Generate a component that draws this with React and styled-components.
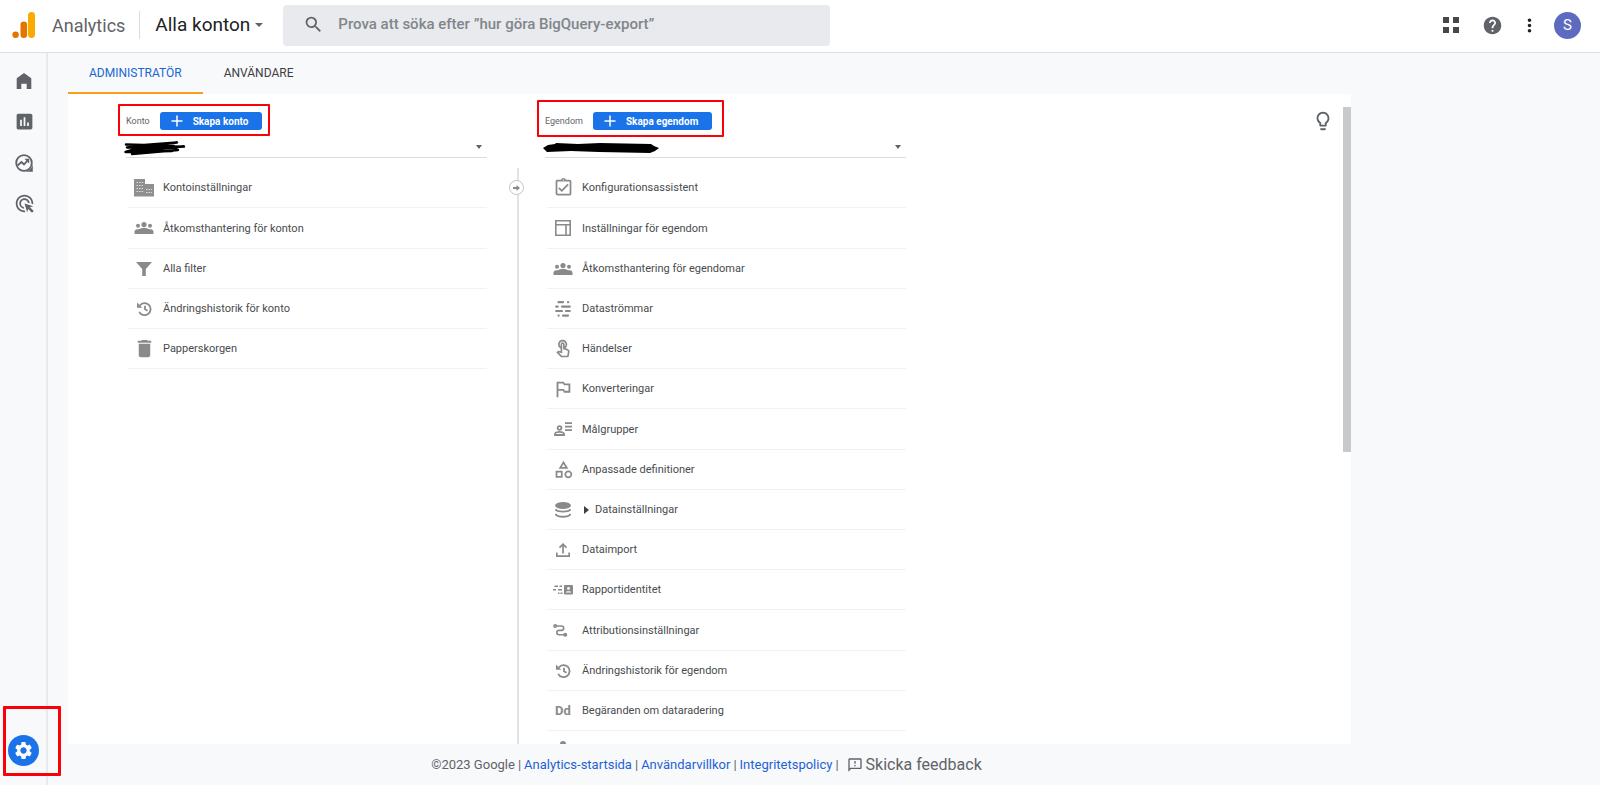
import React from "react";
import styled, { createGlobalStyle } from "styled-components";
import {
  MdAdsClick,
  MdDelete,
  MdHelp,
  MdInsertChart,
  MdMoreVert,
  MdOutlineAssignmentTurnedIn,
  MdOutlineCategory,
  MdOutlineFeedback,
  MdOutlineLightbulb,
  MdOutlineTouchApp,
  MdOutlinedFlag,
  MdSearch,
  MdSettings,
} from "react-icons/md";

const GlobalStyle = createGlobalStyle`
  * {
    box-sizing: border-box;
  }

  body {
    margin: 0;
    font-family: Roboto, "Liberation Sans", sans-serif;
    color: #3c4043;
    background-color: #f8f9fb;
  }

  button,
  input,
  select {
    font-family: inherit;
  }

  svg {
    display: block;
    flex-shrink: 0;
  }
`;

const Page = styled.div`
  height: 100vh;
  display: flex;
  flex-direction: column;
`;

const Header = styled.header`
  height: 53px;
  padding: 0 19px 2px 12px;
  display: flex;
  align-items: center;
  background-color: #ffffff;
  border-bottom: 1px solid #dfe0e2;
`;

const Brand = styled.a`
  height: 28px;
  padding-right: 14px;
  margin-right: 15px;
  display: flex;
  align-items: center;
  gap: 16px;
  border-right: 1px solid #dadce0;
  color: #5f6368;
  font-size: 18px;
  text-decoration: none;
`;

const AccountPicker = styled.button`
  margin-right: 20px;
  padding: 0;
  display: flex;
  align-items: center;
  gap: 5px;
  border: none;
  background: none;
  color: #202124;
  font-size: 19px;
  line-height: 24px;
  white-space: nowrap;
`;

const SearchBox = styled.label`
  height: 41px;
  flex: 0 1 547px;
  padding: 0 20px 2px;
  display: flex;
  align-items: center;
  gap: 14px;
  border-radius: 4px;
  background-color: #e8eaed;
  color: #5f6368;
`;

const SearchInput = styled.input`
  flex: 1;
  min-width: 0;
  padding: 0;
  border: none;
  outline: none;
  background: none;
  font-size: 15px;
  font-weight: 500;

  &::placeholder {
    color: #80868b;
    opacity: 1;
  }
`;

const HeaderActions = styled.div`
  margin-left: auto;
  display: flex;
  align-items: center;
`;

const IconButton = styled.button`
  width: ${(props) => props.$width || 40}px;
  height: 32px;
  padding: 0;
  display: flex;
  align-items: center;
  justify-content: center;
  border: none;
  background: none;
  color: ${(props) => props.$color || "#5f6368"};
`;

const Avatar = styled.button`
  width: 27px;
  height: 27px;
  margin-left: 9px;
  padding: 0;
  border: none;
  border-radius: 50%;
  background-color: #5c6bc0;
  color: #ffffff;
  font-size: 15px;
`;

const Body = styled.div`
  flex: 1;
  min-height: 0;
  display: flex;
`;

const Sidebar = styled.nav`
  width: 48px;
  flex-shrink: 0;
  padding: 7px 0 19px;
  display: flex;
  flex-direction: column;
  align-items: center;
  border-right: 2px solid #e8eaed;
`;

const SideLink = styled.a`
  width: 46px;
  height: 41px;
  padding-left: 2px;
  display: flex;
  align-items: center;
  justify-content: center;
  color: #5f6368;
`;

const AdminSlot = styled.div`
  position: relative;
  margin-top: auto;
`;

const AdminButton = styled.button`
  width: 31px;
  height: 31px;
  padding: 0;
  display: flex;
  align-items: center;
  justify-content: center;
  border: none;
  border-radius: 50%;
  background-color: #1a73e8;
  color: #ffffff;
`;

/* red frame drawn round the controls that the guide talks about */
const Highlight = styled.span`
  position: absolute;
  inset: ${(props) => props.$inset};
  border: ${(props) => props.$thickness || 2}px solid #fb0007;
  border-radius: 1px;
  pointer-events: none;
`;

const Main = styled.main`
  flex: 1;
  min-width: 0;
  padding: 0 249px 0 20px;
  display: flex;
  flex-direction: column;
`;

const Tabs = styled.div`
  height: 41px;
  flex-shrink: 0;
  display: flex;
`;

const Tab = styled.button`
  padding: 0 21px;
  border: none;
  border-bottom: 2px solid ${(props) => (props.$active ? "#f99d1c" : "transparent")};
  background: none;
  color: ${(props) => (props.$active ? "#1967d2" : "#3c4043")};
  font-size: 12px;
`;

const Panel = styled.section`
  flex: 1;
  min-height: 0;
  display: flex;
  overflow: hidden;
  background-color: #ffffff;
`;

const Columns = styled.div`
  flex: 1;
  padding: 18px 18px 0 58px;
  display: grid;
  grid-template-columns: 1fr 58px 1fr 58px 1fr;
`;

const ScrollTrack = styled.div`
  width: 8px;
  padding-top: 13px;
`;

const ScrollThumb = styled.div`
  height: 345px;
  background-color: #c9c9c9;
`;

const Column = styled.div`
  min-width: 0;
`;

const ColumnHead = styled.div`
  position: relative;
  width: max-content;
  height: 18px;
  display: flex;
  align-items: center;
  gap: 10px;
  color: #5f6368;
  font-size: 9px;
`;

const CreateButton = styled.button`
  height: 18px;
  padding: 0 14px 0 11px;
  display: flex;
  align-items: center;
  gap: 10px;
  border: none;
  border-radius: 3px;
  background-color: #1a73e8;
  color: #ffffff;
  font-size: 10px;
  font-weight: 700;
`;

const Picker = styled.div`
  position: relative;
  height: 21px;
  margin: 7px 0 10px;
  display: flex;
  align-items: center;
  border-bottom: 1px solid #dadce0;
  color: #5f6368;
`;

const PickerSelect = styled.select`
  flex: 1;
  height: 20px;
  border: none;
  background: none;
  appearance: none;
`;

const PickerArrow = styled.span`
  margin-right: 5px;
  border: 3px solid transparent;
  border-top: 4px solid #5f6368;
  border-bottom: none;
`;

const Redaction = styled.svg`
  position: absolute;
  left: -2px;
  top: 3px;
`;

const List = styled.ul`
  margin: 0 0 0 2px;
  padding: 0;
  list-style: none;
`;

const Item = styled.li`
  height: 40px;
  border-bottom: 1px solid #f1f2f3;

  &:nth-child(5n + 2) {
    height: 41px;
  }
`;

const ItemLink = styled.a`
  height: 100%;
  padding-left: 5px;
  display: flex;
  align-items: center;
  gap: 8px;
  color: #484b4e;
  font-size: 11px;
  text-decoration: none;
`;

const ItemIcon = styled.span`
  width: 22px;
  display: flex;
  justify-content: center;
  color: #8a8a8a;
  font-size: 13px;
  font-weight: 700;
`;

const Expander = styled.span`
  margin: 0 -2px 0 2px;
  border: 4px solid transparent;
  border-left: 5px solid #3c4043;
  border-right: none;
`;

const Connector = styled.div`
  position: relative;
  margin: 56px 26px 0 30px;
  background-color: #e4e4e4;
`;

const ConnectorArrow = styled.button`
  position: absolute;
  top: 12px;
  left: -8px;
  width: 15px;
  height: 15px;
  padding: 0;
  display: flex;
  align-items: center;
  justify-content: center;
  border: 1px solid #c4c4c4;
  border-radius: 50%;
  background-color: #ffffff;
`;

const TipColumn = styled.div`
  grid-column: 5;
  margin-right: -9px;
  display: flex;
  justify-content: flex-end;
  align-items: flex-start;
`;

const TipButton = styled.button`
  width: 22px;
  height: 18px;
  padding: 0;
  display: flex;
  align-items: center;
  border: none;
  background: none;
  color: #5f6368;
`;

const Footer = styled.footer`
  height: 41px;
  flex-shrink: 0;
  padding-right: 6px;
  display: flex;
  align-items: center;
  justify-content: center;
  gap: 3px;
  color: #5f6368;
  font-size: 13px;
  white-space: nowrap;
`;

const FooterLink = styled.a`
  color: #1f62d3;
  text-decoration: none;
`;

const FeedbackButton = styled.button`
  margin-left: 5px;
  padding: 0;
  display: flex;
  align-items: center;
  gap: 3px;
  border: none;
  background: none;
  color: #5f6368;
  font-size: 16px;
`;

const LogoIcon = () => (
  <svg width="24" height="26" viewBox="0 0 24 26">
    <rect x="16" y="0" width="7" height="26" rx="3.4" fill="#f9ab00" />
    <rect x="8.500" y="9.5" width="6.6" height="16.5" rx="3.3" fill="#e37400" />
    <circle cx="3.600" cy="22.8" r="3.2" fill="#e37400" />
  </svg>
);

const CaretIcon = () => (
  <svg width="8" height="4" viewBox="0 0 8 4" fill="#5f6368">
    <path d="M0 0h8L4 4z" />
  </svg>
);

const AppsIcon = () => (
  <svg width="16" height="16" viewBox="0 0 16 16" fill="currentColor">
    <path d="M0 0h6v6H0zM10 0h6v6h-6zM0 10h6v6H0zM10 10h6v6h-6z" />
  </svg>
);

const HomeIcon = () => (
  <svg width="16" height="16" viewBox="0 0 16 16" fill="currentColor">
    <path d="M8 0 .7 5.300V16h4.600v-5.200h5.400V16h4.600V5.300z" />
  </svg>
);

const ExploreIcon = () => (
  <svg width="18" height="18" viewBox="0 0 18 18" fill="none" stroke="currentColor" strokeWidth="1.800">
    <circle cx="9" cy="9" r="7.800" />
    <path d="m2.500 11.500 4-3.500 2.500 2.500 3.500-3.800" />
    <path d="M9.500 4.800h4.700v4.700z" fill="currentColor" stroke="none" />
    <path d="M10 17.800c4-.5 7-3.500 7.800-7.800v7.800z" fill="currentColor" stroke="none" />
  </svg>
);

const BuildingIcon = () => (
  <svg width="20" height="18" viewBox="0 0 20 18">
    <path d="M0 0h11v5h9v12.500H0z" fill="#8f8f8f" />
    <path
      d="M2.500 3.500h6.500M2.500 6.500h6.500M2.500 9.500h6.500M2.500 12.500h6.500M12 10.500h6M12 13.500h6"
      stroke="#ffffff"
      strokeWidth="1.200"
      strokeDasharray="1.500 1"
      opacity=".7"
    />
  </svg>
);

const GroupIcon = () => (
  <svg width="20" height="12" viewBox="0 0 20 12" fill="currentColor">
    <circle cx="4" cy="3.800" r="2" />
    <circle cx="10" cy="2.600" r="2.600" />
    <circle cx="16" cy="3.800" r="2" />
    <path d="M.5 12V9.500C.5 7.500 3 7 5 7.200 7 5.700 13 5.700 15 7.200c2-.2 4.500.3 4.500 2.300V12z" />
  </svg>
);

const FilterIcon = () => (
  <svg width="16" height="14" viewBox="0 0 16 14" fill="currentColor">
    <path d="M0 0h16L9.800 7v7H6.200V7z" />
  </svg>
);

const HistoryIcon = () => (
  <svg width="16" height="14" viewBox="0 0 16 14" fill="none" stroke="currentColor" strokeWidth="1.800">
    <path d="M3.800 3.500a6 6 0 1 1-.6 6.300M9 3.800v3.500l2.500 1.400" />
    <path d="M1 .5v5.300h5.300z" fill="currentColor" stroke="none" />
  </svg>
);

const LayoutIcon = () => (
  <svg width="16" height="16" viewBox="0 0 16 16" fill="none" stroke="currentColor" strokeWidth="1.600">
    <path d="M.8.8h14.400v14.400H.8zM.8 4.800h14.400M11 4.800v10.400" />
  </svg>
);

const StreamsIcon = () => (
  <svg width="16" height="16" viewBox="0 0 16 16" stroke="currentColor" strokeWidth="2.200" strokeLinecap="round">
    <path d="M3.500 1.200h4.500M13 1.200h.2M1.200 5.600h1.500M7 5.600h7.800M1.200 10h5.800M11 10h3.800M3.500 14.600h.2M8 14.600h5" />
  </svg>
);

const AudienceIcon = () => (
  <svg width="18" height="14" viewBox="0 0 18 14" fill="none" stroke="currentColor" strokeWidth="1.800">
    <circle cx="5.500" cy="6" r="1.900" />
    <path d="M1 13v-1c0-1.500 3-2.200 4.500-2.200S10 10.500 10 12v1z" />
    <path d="M11 1.200h7M11 4.700h7M11 8.200h7" />
  </svg>
);

const DatabaseIcon = () => (
  <svg width="16" height="16" viewBox="0 0 16 16" fill="none" stroke="currentColor" strokeWidth="1.800">
    <ellipse cx="8" cy="3.500" rx="8" ry="3.500" fill="currentColor" stroke="none" />
    <path d="M.3 7.200c2 3.200 13.400 3.200 15.400 0M.3 11.800c2 3.900 13.400 3.900 15.400 0" />
  </svg>
);

const UploadIcon = () => (
  <svg width="14" height="14" viewBox="0 0 14 14" fill="none" stroke="currentColor" strokeWidth="1.700">
    <path d="M.8 9.500v3.700h12.400V9.500M7 10.500V1.500M3.500 4.700 7 1.200l3.500 3.500" />
  </svg>
);

const IdentityIcon = () => (
  <svg width="20" height="10" viewBox="0 0 20 10">
    <path
      d="M1.500 1.200H5M6.500 1.200h2.500M0 4.700h3M5 4.700h4M5 8.200h1.500M7.500 8.200h2"
      stroke="currentColor"
      strokeWidth="1.600"
    />
    <rect x="11" y="0" width="9" height="9.500" rx="1" fill="currentColor" />
    <circle cx="15.500" cy="3.400" r="1.400" fill="#ffffff" />
    <path d="M12.800 7.500c0-1.700 5.400-1.700 5.400 0z" fill="#ffffff" />
  </svg>
);

const AttributionIcon = () => (
  <svg width="20" height="13" viewBox="0 0 20 13" fill="none" stroke="currentColor" strokeWidth="1.600">
    <circle cx="2.200" cy="2" r="1.200" />
    <path d="M4 2h4.500a2.200 2.200 0 0 1 0 4.400H6a2.200 2.200 0 0 0 0 4.400h5" />
    <circle cx="12.200" cy="10.800" r="2" fill="currentColor" stroke="none" />
  </svg>
);

const PersonIcon = () => (
  <svg width="16" height="20" viewBox="0 0 16 20" fill="currentColor">
    <circle cx="8" cy="3" r="3" />
    <path d="M2 14c0-5 12-5 12 0v3H2z" />
  </svg>
);

const ArrowIcon = () => (
  <svg width="7" height="6" viewBox="0 0 7 6" fill="#8a8a8a">
    <path d="M0 2h3.500V0L7 3 3.500 6V4H0z" />
  </svg>
);

const AccountScribble = () => (
  <Redaction width="66" height="16" viewBox="0 0 66 16" fill="none" stroke="#000" strokeWidth="2.500" strokeLinecap="round" strokeLinejoin="round" aria-hidden="true">
    <path d="M2 4.500 20 5 53 2.500 3 7.500 60 6.500 8 10 1.500 12 54 10 8 14 50 6 10 6 52 8 M30 7 12 12 48 11" />
  </Redaction>
);

const PropertyScribble = () => (
  <Redaction width="118" height="16" viewBox="0 0 118 16" aria-hidden="true">
    <path d="m0 8 5-3 7-1 1-1 22 1 22-1 51 1 3 2 5 2-4 3-5 2-51-1-28-1-24 1-2-2z" fill="#000" />
  </Redaction>
);

const accountItems = [
  { icon: <BuildingIcon />, label: "Kontoinställningar" },
  { icon: <GroupIcon />, label: "Åtkomsthantering för konton" },
  { icon: <FilterIcon />, label: "Alla filter" },
  { icon: <HistoryIcon />, label: "Ändringshistorik för konto" },
  { icon: <MdDelete size={23} />, label: "Papperskorgen" },
];

const propertyItems = [
  { icon: <MdOutlineAssignmentTurnedIn size={21} />, label: "Konfigurationsassistent" },
  { icon: <LayoutIcon />, label: "Inställningar för egendom" },
  { icon: <GroupIcon />, label: "Åtkomsthantering för egendomar" },
  { icon: <StreamsIcon />, label: "Dataströmmar" },
  { icon: <MdOutlineTouchApp size={20} />, label: "Händelser" },
  { icon: <MdOutlinedFlag size={22} />, label: "Konverteringar" },
  { icon: <AudienceIcon />, label: "Målgrupper" },
  { icon: <MdOutlineCategory size={21} />, label: "Anpassade definitioner" },
  { icon: <DatabaseIcon />, label: "Datainställningar", expandable: true },
  { icon: <UploadIcon />, label: "Dataimport" },
  { icon: <IdentityIcon />, label: "Rapportidentitet" },
  { icon: <AttributionIcon />, label: "Attributionsinställningar" },
  { icon: <HistoryIcon />, label: "Ändringshistorik för egendom" },
  { icon: "Dd", label: "Begäranden om dataradering" },
  { icon: <PersonIcon />, label: "" },
];

const SettingsList = ({ items }) => (
  <List>
    {items.map((item) => (
      <Item key={item.label}>
        <ItemLink href="#">
          <ItemIcon>{item.icon}</ItemIcon>
          {item.expandable && <Expander />}
          <span>{item.label}</span>
        </ItemLink>
      </Item>
    ))}
  </List>
);

const SettingsColumn = ({ title, action, inset, scribble, items }) => (
  <Column>
    <ColumnHead>
      <span>{title}</span>
      <CreateButton>
        <svg width="12" height="12" viewBox="0 0 12 12" stroke="#fff" strokeWidth="1.500">
          <path d="M6 .5v11M.5 6h11" />
        </svg>
        {action}
      </CreateButton>
      <Highlight $inset={inset} />
    </ColumnHead>
    <Picker>
      <PickerSelect aria-label={title} />
      <PickerArrow />
      {scribble}
    </Picker>
    <SettingsList items={items} />
  </Column>
);

const App = () => {
  return (
    <Page>
      <GlobalStyle />
      <Header>
        <Brand href="#">
          <LogoIcon />
          Analytics
        </Brand>
        <AccountPicker>
          Alla konton
          <CaretIcon />
        </AccountPicker>
        <SearchBox>
          <MdSearch size={21} />
          <SearchInput aria-label="Sök" placeholder="Prova att söka efter ”hur göra BigQuery-export”" />
        </SearchBox>
        <HeaderActions>
          <IconButton aria-label="Appar" $color="#474747">
            <AppsIcon />
          </IconButton>
          <IconButton aria-label="Hjälp" $width={42}>
            <MdHelp size={21} />
          </IconButton>
          <IconButton aria-label="Mer" $width={32} $color="#202124">
            <MdMoreVert size={21} />
          </IconButton>
          <Avatar>S</Avatar>
        </HeaderActions>
      </Header>
      <Body>
        <Sidebar>
          <SideLink href="#" aria-label="Startsida">
            <HomeIcon />
          </SideLink>
          <SideLink href="#" aria-label="Rapporter">
            <MdInsertChart size={21} />
          </SideLink>
          <SideLink href="#" aria-label="Utforska">
            <ExploreIcon />
          </SideLink>
          <SideLink href="#" aria-label="Annonsering">
            <MdAdsClick size={21} />
          </SideLink>
          <AdminSlot>
            <AdminButton aria-label="Administratör">
              <MdSettings size={21} />
            </AdminButton>
            <Highlight $inset="-29px -22px -10px -5px" $thickness={3} />
          </AdminSlot>
        </Sidebar>
        <Main>
          <Tabs>
            <Tab $active>ADMINISTRATÖR</Tab>
            <Tab>ANVÄNDARE</Tab>
          </Tabs>
          <Panel>
            <Columns>
              <SettingsColumn
                title="Konto"
                action="Skapa konto"
                inset="-8px -8px -6px"
                scribble={<AccountScribble />}
                items={accountItems}
              />
              <Connector>
                <ConnectorArrow aria-label="Flytta">
                  <ArrowIcon />
                </ConnectorArrow>
              </Connector>
              <SettingsColumn
                title="Egendom"
                action="Skapa egendom"
                inset="-12px -12px -7px -8px"
                scribble={<PropertyScribble />}
                items={propertyItems}
              />
              <TipColumn>
                <TipButton aria-label="Tips">
                  <MdOutlineLightbulb size={22} />
                </TipButton>
              </TipColumn>
            </Columns>
            <ScrollTrack>
              <ScrollThumb />
            </ScrollTrack>
          </Panel>
          <Footer>
            <span>©2023 Google</span>|
            <FooterLink href="#">Analytics-startsida</FooterLink>|
            <FooterLink href="#">Användarvillkor</FooterLink>|
            <FooterLink href="#">Integritetspolicy</FooterLink>|
            <FeedbackButton>
              <MdOutlineFeedback size={16} />
              Skicka feedback
            </FeedbackButton>
          </Footer>
        </Main>
      </Body>
    </Page>
  );
};

export default App;
